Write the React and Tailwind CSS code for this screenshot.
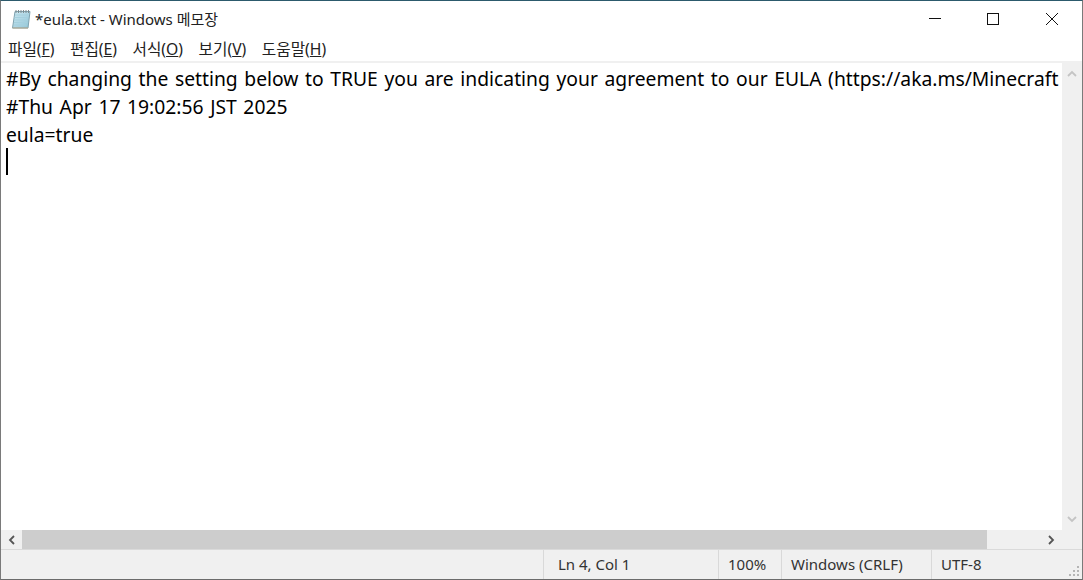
const menus = [
  ["파일(", "F", ")"],
  ["편집(", "E", ")"],
  ["서식(", "O", ")"],
  ["보기(", "V", ")"],
  ["도움말(", "H", ")"],
];

function NotepadIcon() {
  return (
    <svg width="20" height="20" viewBox="0 0 20 20" className="shrink-0">
      <defs>
        <linearGradient id="pad" x1="0" y1="0" x2="1" y2="1">
          <stop offset="0" stopColor="#cfe9f2" />
          <stop offset="1" stopColor="#8fc4d6" />
        </linearGradient>
      </defs>
      <path d="M4 2.5h15L17 19H1.5z" fill="url(#pad)" stroke="#7fa3b0" strokeWidth="1" />
      <path d="M4 6h13M3.6 8.5h13M3.3 11h13M3 13.5h13M2.7 16h13" stroke="#a5d0de" strokeWidth="1" />
      <path d="M5 1v3M7.5 1v3M10 1v3M12.5 1v3M15 1v3M17.5 1v3" stroke="#808c90" strokeWidth="1" />
      <path d="M1.5 19h15.5" stroke="#b9a98c" strokeWidth="1" />
    </svg>
  );
}

function Chevron({ d }) {
  return (
    <svg width="10" height="10" viewBox="0 0 10 10" fill="none" stroke="currentColor" strokeWidth="1.8">
      <path d={d} />
    </svg>
  );
}

export default function App() {
  return (
    <div className="w-[1083px] h-[580px] flex flex-col overflow-hidden bg-white border-x border-b border-x-[#7a7a7a] border-b-[#6b6b6b] border-t border-t-[#2c5a6c] text-black font-['Noto_Sans','Noto_Sans_CJK_KR',sans-serif]">
      {/* title bar */}
      <div className="h-[30px] flex items-center shrink-0 pt-[6px]">
        <div className="pl-[10px] flex items-center gap-[4px] flex-1">
          <NotepadIcon />
          <span className="text-[15px] text-[#222]">*eula.txt - Windows 메모장</span>
        </div>
        <div className="flex items-center">
          <div className="w-[58px] flex justify-center">
            <svg width="14" height="14" viewBox="0 0 14 14"><path d="M1 6.5h12" stroke="#111" strokeWidth="1" /></svg>
          </div>
          <div className="w-[58px] flex justify-center">
            <svg width="14" height="14" viewBox="0 0 14 14" fill="none"><rect x="1.5" y="1.5" width="11" height="11" stroke="#111" strokeWidth="1" /></svg>
          </div>
          <div className="w-[60px] flex justify-center">
            <svg width="14" height="14" viewBox="0 0 14 14" fill="none"><path d="M1 1l12 12M13 1L1 13" stroke="#111" strokeWidth="1" /></svg>
          </div>
        </div>
      </div>

      {/* menu bar */}
      <div className="h-[30px] flex items-center gap-[15.5px] pl-[7px] pt-[7px] shrink-0 text-[15.7px] text-[#222]">
        {menus.map(([label, key, end]) => (
          <span key={key}>
            {label}
            <span className="underline">{key}</span>
            {end}
          </span>
        ))}
      </div>

      {/* editor */}
      <div className="flex-1 flex min-h-0 border-t-2 border-[#f0f0f0]">
        <div className="flex-1 min-w-0 overflow-hidden whitespace-nowrap pl-[5px] pt-[2px] text-[19.3px] leading-[28px] [word-spacing:1.6px]">
          <div>#By changing the setting below to TRUE you are indicating your agreement to our EULA (https://aka.ms/Minecraft</div>
          <div>#Thu Apr 17 19:02:56 JST 2025</div>
          <div>eula=true</div>
          <div className="w-[2px] h-[27px] bg-black -mt-[1px]" />
        </div>
        <div className="w-[20px] shrink-0 bg-[#f0f0f0] flex flex-col justify-between items-center py-[6px] text-[#c4c4c4]">
          <Chevron d="M1 7l4-4 4 4" />
          <Chevron d="M1 3l4 4 4-4" />
        </div>
      </div>

      {/* horizontal scrollbar */}
      <div className="h-[19px] flex shrink-0 bg-[#f0f0f0] text-[#555]">
        <div className="w-[21px] flex items-center justify-center"><Chevron d="M7 1L3 5l4 4" /></div>
        <div className="w-[965px] bg-[#cdcdcd]" />
        <div className="flex-1 flex items-center justify-end pr-[26px]"><Chevron d="M3 1l4 4-4 4" /></div>
      </div>

      {/* status bar */}
      <div className="h-[30px] flex shrink-0 bg-[#f0f0f0] border-t border-[#dadada] text-[15px] text-[#333] items-stretch relative">
        <div className="w-[542px]" />
        <div className="w-[175px] border-l border-[#d9d9d9] pl-[14px] flex items-center">Ln 4, Col 1</div>
        <div className="w-[63px] border-l border-[#d9d9d9] pl-[9px] flex items-center">100%</div>
        <div className="w-[150px] border-l border-[#d9d9d9] pl-[9px] flex items-center">Windows (CRLF)</div>
        <div className="flex-1 border-l border-[#d9d9d9] pl-[9px] flex items-center">UTF-8</div>
        <svg width="12" height="12" viewBox="0 0 12 12" className="absolute right-[1px] bottom-[1px]" fill="#b5b5b5">
          <rect x="8" y="0" width="2" height="2" />
          <rect x="4" y="4" width="2" height="2" />
          <rect x="8" y="4" width="2" height="2" />
          <rect x="0" y="8" width="2" height="2" />
          <rect x="4" y="8" width="2" height="2" />
          <rect x="8" y="8" width="2" height="2" />
        </svg>
      </div>
    </div>
  );
}
